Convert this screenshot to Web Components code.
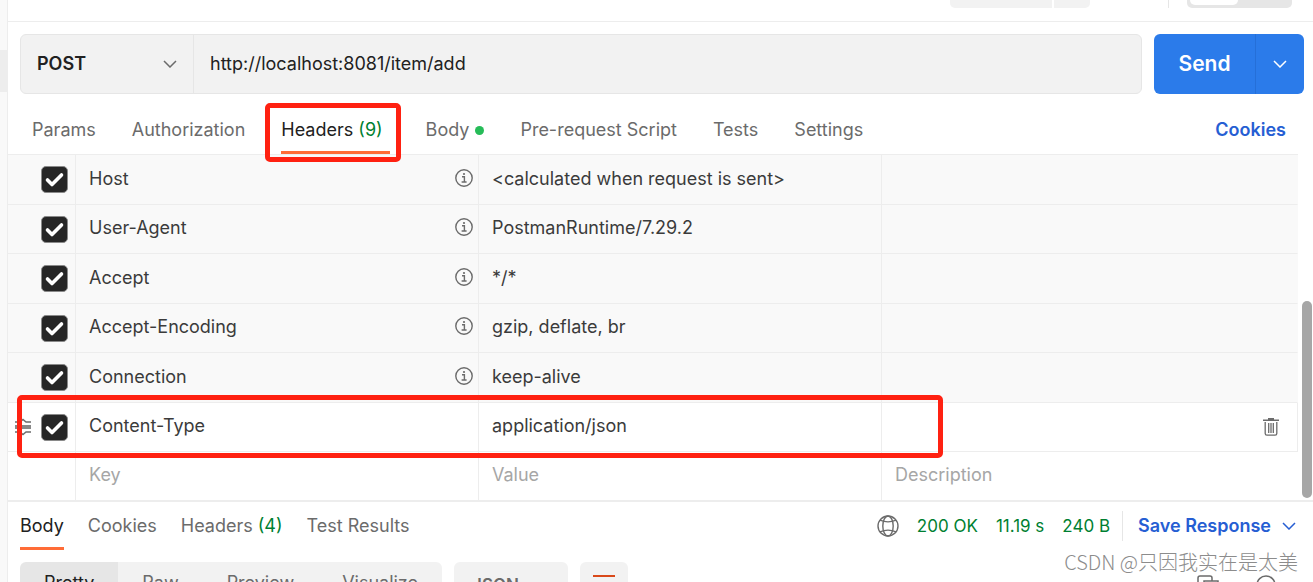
<!DOCTYPE html>
<html lang="en">
<head>
<meta charset="utf-8">
<title>POST request</title>
<style>
html, body { margin: 0; height: 100%; overflow: hidden; background: #fff; }
body { font: 400 18px/24px Inter, "Noto Sans CJK SC", sans-serif; color: #212121; }
</style>
</head>
<body>
<api-client></api-client>
<script>
const define = (name, html, setup) => {
  const t = document.createElement('template');
  t.innerHTML = html;
  customElements.define(name, class extends HTMLElement {
    constructor() {
      super();
      this.attachShadow({ mode: 'open' }).append(t.content.cloneNode(true));
    }
    connectedCallback() { if (setup) setup(this, this.shadowRoot); }
  });
};

const icons = {
  chevron: [14, 8, '<path d="M1 1l6 6 6-6" fill="none" stroke="currentColor" stroke-width="1.5"/>'],
  info: [18, 18, '<circle cx="9" cy="9" r="8.2" fill="none" stroke="currentColor" stroke-width="1.4"/><path d="M7 7.700h2.400V13M6.600 13h5" fill="none" stroke="currentColor" stroke-width="1.4"/><circle cx="9" cy="5" r="1.1" fill="currentColor"/>'],
  trash: [16, 18, '<path d="M5 0h6v1.500h5V3H0V1.500h5z" fill="currentColor"/><path d="M2.200 4v11.500q0 1.700 1.700 1.700h8.200q1.700 0 1.700-1.700V4M5.700 5v10M8 5v10M10.300 5v10" fill="none" stroke="currentColor" stroke-width="1.300"/>'],
  globe: [22, 22, '<g fill="none" stroke="currentColor" stroke-width="1.400"><circle cx="11" cy="11" r="10"/><ellipse cx="11" cy="11" rx="5.200" ry="10"/><path d="M3 5.200q8 3.400 16 0M3 16.800q8-3.400 16 0"/></g>'],
  drag: [16, 18, '<g fill="none" stroke="currentColor" stroke-width="1.400"><path d="M0 4h5l3-2.500L11 4h5M0 14h5l3 2.500 3-2.500h5"/></g><path d="M0 7h16v4H0z" fill="currentColor" opacity=".8"/>'],
  wrap: [22, 18, '<path d="M0 1h22M0 9h18q3 0 3 3t-3 3h-6M0 15h6" fill="none" stroke="currentColor" stroke-width="2"/>'],
  copy: [22, 22, '<path d="M15 6V3q0-2-2-2H3q-2 0-2 2v11q0 2 2 2h4M7 6h14v15H7z" fill="none" stroke="currentColor" stroke-width="1.500"/>'],
  search: [24, 24, '<circle cx="10" cy="10" r="9" fill="none" stroke="currentColor" stroke-width="1.500"/><path d="M16.500 16.500l6 6" stroke="currentColor" stroke-width="1.500"/>']
};
define('ui-icon', '<style>:host{display:block;flex:none}svg{display:block}</style>', (el, root) => {
  const [w, h, body] = icons[el.getAttribute('name')];
  root.innerHTML += `<svg width="${w}" height="${h}" viewBox="0 0 ${w} ${h}" aria-hidden="true">${body}</svg>`;
});

define('top-bar', `
<style>
:host{display:flex;justify-content:flex-end;height:21px;border-bottom:1px solid #ededed}
span{height:8px;box-sizing:border-box;flex:none}
.save{width:102px;background:#f2f2f2;border-radius:0 0 0 5px;margin-right:2px}
.more{width:36px;background:#f2f2f2;border-radius:0 0 5px 0;margin-right:78px}
.rule{width:1px;background:#e6e6e6;margin-right:18px}
.toggle{width:105px;background:#e6e6e6;border-radius:0 0 5px 5px;margin-right:21px;padding:0 3px 3px}
i{display:block;width:48px;height:5px;background:#fff;border-radius:0 0 5px 5px}
</style>
<span class="save"></span><span class="more"></span><span class="rule"></span><span class="toggle"><i></i></span>`);

define('url-bar', `
<style>
:host{display:flex;gap:12px;padding:12px 9px 0 12px;height:60px}
.box{flex:1;display:flex;box-sizing:border-box;border:1px solid #e6e6e6;border-radius:6px;background:#f2f2f2;overflow:hidden}
.method{position:relative;width:172px;border-right:1px solid #e6e6e6;display:flex;flex:none}
select,input,button{font:inherit;color:inherit;border:0;background:none;margin:0;outline:0;border-radius:0}
select{appearance:none;width:100%;padding:0 16px;font-weight:600}
.method ui-icon{position:absolute;right:16px;top:25px;color:#6b6b6b;pointer-events:none}
input{flex:1;min-width:0;padding:0 16px}
.send{display:flex;border-radius:6px;overflow:hidden;background:#2b7bea;color:#fff;flex:none}
.send button{display:flex;align-items:center;justify-content:center;padding:0}
.send .go{width:101px;font-size:21px;font-weight:600}
.send .menu{width:49px;border-left:1px solid #256fd8}
</style>
<div class="box">
<div class="method"><select aria-label="Method"><option>POST</option></select><ui-icon name="chevron"></ui-icon></div>
<input aria-label="Request URL" value="http://localhost:8081/item/add" spellcheck="false">
</div>
<div class="send"><button class="go">Send</button><button class="menu" aria-label="Send options"><ui-icon name="chevron"></ui-icon></button></div>`);

define('tab-item', `
<style>
:host{display:flex;position:relative;color:#6b6b6b}
button{font:inherit;color:inherit;background:none;border:0;padding:0;display:flex;align-items:center;white-space:pre;border-bottom:3px solid transparent;border-top:3px solid transparent}
:host([active]){color:#212121}
:host([active]) button{border-bottom-color:#ff6c37}
:host([count]) button{padding-right:var(--count-space,0)}
:host([dot]) button::after{content:"";width:9px;height:9px;border-radius:5px;background:#26bc58;margin-left:6px}
.count{color:#007f31}
:host([marked])::after{content:"";position:absolute;top:-3px;right:-11px;bottom:-8px;left:-16px;border:5px solid #ff2111;border-radius:5px;z-index:2;pointer-events:none}
</style>
<button><slot></slot><span class="count"></span></button>`, (el, root) => {
  if (el.hasAttribute('count')) root.querySelector('.count').textContent = ` (${el.getAttribute('count')})`;
});

define('request-tabs', `
<style>
:host{display:flex;height:48px;border-bottom:1px solid #ededed;padding:12px 12px 0 24px;margin-right:15px}
nav{display:flex;gap:36px;flex:1;--count-space:7px}
a{color:#265ed3;font-weight:600;text-decoration:none;align-self:center}
</style>
<nav>
<tab-item>Params</tab-item><tab-item>Authorization</tab-item><tab-item active marked count="9">Headers</tab-item><tab-item dot>Body</tab-item><tab-item>Pre-request Script</tab-item><tab-item>Tests</tab-item><tab-item>Settings</tab-item>
</nav><a href="#cookies">Cookies</a>`);

define('header-table', `
<style>
:host{display:flex;position:relative}
table,tbody{display:block;flex:1}
tr{display:grid;grid-template-columns:68px 93fr 93fr 96fr;height:49px;background:#f9f9f9;position:relative}
tr:nth-child(-2n+5){height:50px}
td{display:flex;align-items:center;box-sizing:border-box;padding:0 5px 2px 13px;border:solid #ededed;border-width:0 1px 1px 0;color:#3b3b3b}
td:last-child{border-right-color:transparent}
td:first-child{padding:0 7px;justify-content:flex-end}
tr.custom,tr.blank{background:#fff}
tr.custom td:last-child{border-right-color:#ededed;padding:0 18px 0 0}
tr.blank{height:48px}
tr.blank td{border-bottom:0}
td input:not([type=checkbox]){font:inherit;border:0;padding:0;background:none;flex:1;min-width:0;height:24px}
input::placeholder{color:#a6a6a6;opacity:1}
td ui-icon{color:#6b6b6b;margin-left:auto}
label{display:block;position:relative;width:27px;height:27px}
label input{appearance:none;margin:0;width:27px;height:27px;border-radius:5px;background:#262626;border:1px solid #8a8a8a;display:block}
label svg{position:absolute;inset:0;pointer-events:none}
.drag{margin:0 10px 0 0}
td>ui-icon[name=info]{padding-bottom:2px}
button{border:0;background:none;padding:0;margin-left:auto}
tr.custom::after{content:"";position:absolute;top:-8px;bottom:-6px;left:9px;right:355px;border:5px solid #ff2111;border-radius:5px;z-index:2;pointer-events:none}
.track{width:15px;flex:none;display:flex;flex-direction:column;justify-content:flex-end;align-items:flex-end}
.thumb{width:10px;height:57%;background:#a6a6a6;border-radius:5px;margin:0 1px 2px 0}
</style>
<table><tbody></tbody></table><div class="track"><div class="thumb"></div></div>`, (el, root) => {
  const rows = [['Host', '<calculated when request is sent>'], ['User-Agent', 'PostmanRuntime/7.29.2'], ['Accept', '*/*'], ['Accept-Encoding', 'gzip, deflate, br'], ['Connection', 'keep-alive'], ['Content-Type', 'application/json']];
  const esc = s => s.replace(/</g, '&lt;');
  root.querySelector('tbody').innerHTML = rows.map(([k, v], i) => {
    const own = i === 5;
    return `<tr class="${own ? 'custom' : ''}"><td>${own ? '<ui-icon class="drag" name="drag"></ui-icon>' : ''}<label><input type="checkbox" checked aria-label="${k}"><svg width="27" height="27" viewBox="0 0 27 27"><path d="M6.500 14l4.500 4.500L20.500 9" fill="none" stroke="#fff" stroke-width="3.600" stroke-linecap="round" stroke-linejoin="round"/></svg></label></td><td>${k}${own ? '' : '<ui-icon name="info"></ui-icon>'}</td><td>${esc(v)}</td><td>${own ? '<button aria-label="Delete"><ui-icon name="trash"></ui-icon></button>' : ''}</td></tr>`;
  }).join('') + '<tr class="blank"><td></td>' + ['Key', 'Value', 'Description'].map(p => `<td><input aria-label="${p}" placeholder="${p}"></td>`).join('') + '</tr>';
});

define('response-bar', `
<style>
:host{display:flex;height:48px;border-top:2px solid #ededed;padding:0 17px 0 12px;align-items:stretch}
nav{display:flex;gap:24px;flex:1}
.meta{display:flex;align-items:center;color:#007f31;gap:18px}
.meta>ui-icon{color:#6b6b6b}
.meta>span{font-size:17px}
button{font:inherit;font-weight:600;color:#265ed3;border:0;background:none;padding:0 0 0 15px;border-left:1px solid #e6e6e6;height:30px;display:flex;align-items:center;gap:11px;margin-left:-6px}
</style>
<nav><tab-item active>Body</tab-item><tab-item>Cookies</tab-item><tab-item count="4">Headers</tab-item><tab-item>Test Results</tab-item></nav>
<div class="meta"><ui-icon name="globe"></ui-icon><span>200 OK</span><span>11.19 s</span><span>240 B</span><button>Save Response<ui-icon name="chevron"></ui-icon></button></div>`);

define('view-bar', `
<style>
:host{display:flex;gap:12px;padding:12px 33px 0 12px;height:44px}
button,select{font:inherit;color:#6b6b6b;border:0;margin:0;background:#f2f2f2;padding:0 24px}
.modes{display:flex;border-radius:6px;overflow:hidden}
.modes button{padding-bottom:2px}
.modes button:first-child{background:#e6e6e6;color:#212121}
select{appearance:none;width:114px;padding:2px 18px 0;font-size:17px;font-weight:600;border-radius:6px}
.wrap{width:48px;padding:0 13px;border-radius:6px;color:#d9491a}
.tools{margin-left:auto;display:flex;gap:37px;align-items:flex-start;padding-top:13px;color:#6b6b6b}
</style>
<div class="modes"><button>Pretty</button><button>Raw</button><button>Preview</button><button>Visualize</button></div>
<select aria-label="Format"><option>JSON</option></select>
<button class="wrap" aria-label="Wrap lines"><ui-icon name="wrap"></ui-icon></button>
<div class="tools"><ui-icon name="copy"></ui-icon><ui-icon name="search"></ui-icon></div>`);

define('api-client', `
<style>
:host{display:flex;height:100vh;overflow:hidden;position:relative}
aside{width:7px;flex:none;background:#f9f9f9;border-right:1px solid #ededed}
aside i{display:block;margin-top:50px;height:42px;background:#ededed}
main{flex:1;min-width:0}
.mark{position:absolute;right:15px;bottom:5px;font:300 20px/30px "Noto Sans CJK SC",sans-serif;color:#8c8c8c;white-space:nowrap;z-index:3}
</style>
<aside><i></i></aside>
<main><top-bar></top-bar><url-bar></url-bar><request-tabs></request-tabs><header-table></header-table><response-bar></response-bar><view-bar></view-bar></main>
<div class="mark">CSDN @只因我实在是太美</div>`);
</script>
</body>
</html>
